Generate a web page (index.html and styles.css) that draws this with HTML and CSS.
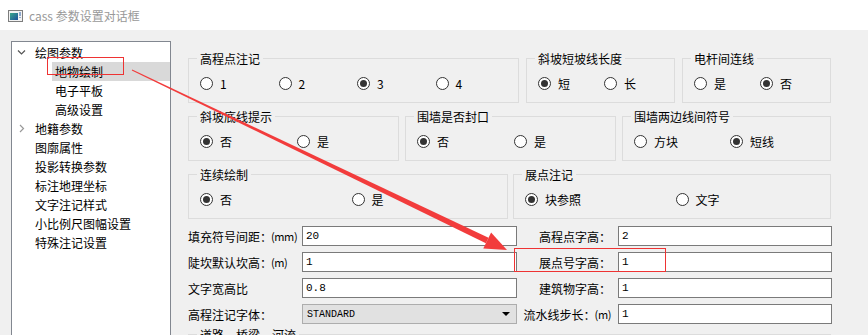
FILE: index.html
```html
<!DOCTYPE html>
<html lang="zh-CN">
<head>
  <meta charset="UTF-8" />
  <title>cass 参数设置对话框</title>
  <link rel="stylesheet" href="styles.css">
</head>
<body>
  <div class="titlebar">
    <svg class="app-icon" width="15" height="12" viewBox="0 0 15 12">
      <defs>
        <linearGradient id="ig" x1="0" y1="0" x2="1" y2="1">
          <stop offset="0" stop-color="#3aa88a"/>
          <stop offset="1" stop-color="#1d4f9c"/>
        </linearGradient>
      </defs>
      <rect x="0.5" y="0.5" width="14" height="11" fill="#f2f2f2" stroke="#7d7d7d"/>
      <rect x="2" y="3" width="8" height="7" fill="url(#ig)"/>
      <rect x="11.5" y="2" width="1" height="4" fill="#2b5fa8"/>
      <rect x="11.5" y="7" width="1" height="1" fill="#2b5fa8"/>
    </svg>
    <span class="title">cass 参数设置对话框</span>
  </div>

  <div class="dialog">
    <ul class="tree">
      <li class="node">
        <svg class="caret" width="9" height="9" viewBox="0 0 9 9"><path d="M1 2.5 L4.5 6 L8 2.5" fill="none" stroke="#555" stroke-width="1.2"/></svg>
        绘图参数
      </li>
      <li class="leaf selected">地物绘制</li>
      <li class="leaf">电子平板</li>
      <li class="leaf">高级设置</li>
      <li class="node">
        <svg class="caret" width="9" height="9" viewBox="0 0 9 9"><path d="M3 1 L6.5 4.5 L3 8" fill="none" stroke="#999" stroke-width="1.2"/></svg>
        地籍参数
      </li>
      <li class="top">图廓属性</li>
      <li class="top">投影转换参数</li>
      <li class="top">标注地理坐标</li>
      <li class="top">文字注记样式</li>
      <li class="top">小比例尺图幅设置</li>
      <li class="top">特殊注记设置</li>
    </ul>

    <div class="panel">
      <div class="groups">
        <div class="group-row">
          <div class="group w331">
            <span class="group-title">高程点注记</span>
            <div class="opts">
              <label class="opt"><span class="radio"></span>1</label>
              <label class="opt"><span class="radio"></span>2</label>
              <label class="opt"><span class="radio on"></span>3</label>
              <label class="opt"><span class="radio"></span>4</label>
            </div>
          </div>
          <div class="group w149">
            <span class="group-title">斜坡短坡线长度</span>
            <div class="opts">
              <label class="opt"><span class="radio on"></span>短</label>
              <label class="opt"><span class="radio"></span>长</label>
            </div>
          </div>
          <div class="group w149">
            <span class="group-title">电杆间连线</span>
            <div class="opts">
              <label class="opt"><span class="radio"></span>是</label>
              <label class="opt"><span class="radio on"></span>否</label>
            </div>
          </div>
        </div>

        <div class="group-row row2">
          <div class="group w211">
            <span class="group-title">斜坡底线提示</span>
            <div class="opts">
              <label class="opt"><span class="radio on"></span>否</label>
              <label class="opt"><span class="radio"></span>是</label>
            </div>
          </div>
          <div class="group w211">
            <span class="group-title">围墙是否封口</span>
            <div class="opts">
              <label class="opt"><span class="radio on"></span>否</label>
              <label class="opt"><span class="radio"></span>是</label>
            </div>
          </div>
          <div class="group w209">
            <span class="group-title">围墙两边线间符号</span>
            <div class="opts">
              <label class="opt"><span class="radio"></span>方块</label>
              <label class="opt"><span class="radio on"></span>短线</label>
            </div>
          </div>
        </div>

        <div class="group-row row3">
          <div class="group w320">
            <span class="group-title">连续绘制</span>
            <div class="opts">
              <label class="opt"><span class="radio on"></span>否</label>
              <label class="opt"><span class="radio"></span>是</label>
            </div>
          </div>
          <div class="group w318">
            <span class="group-title">展点注记</span>
            <div class="opts">
              <label class="opt"><span class="radio on"></span>块参照</label>
              <label class="opt"><span class="radio"></span>文字</label>
            </div>
          </div>
        </div>
      </div>

      <div class="fields">
        <span class="label">填充符号间距：<span class="unit">(mm)</span></span>
        <div class="input">20</div>
        <span class="label right">高程点字高：</span>
        <div class="input">2</div>

        <span class="label">陡坎默认坎高：<span class="unit">(m)</span></span>
        <div class="input">1</div>
        <span class="label right">展点号字高：</span>
        <div class="input">1</div>

        <span class="label">文字宽高比</span>
        <div class="input">0.8</div>
        <span class="label right">建筑物字高：</span>
        <div class="input">1</div>

        <span class="label">高程注记字体：</span>
        <div class="combo">STANDARD<span class="arrow"></span></div>
        <span class="label right">流水线步长：<span class="unit">(m)</span></span>
        <div class="input">1</div>
      </div>

      <div class="group road">
        <span class="group-title">道路、桥梁、河流</span>
      </div>
    </div>
  </div>

  <svg class="marks" width="868" height="335" viewBox="0 0 868 335">
    <rect x="47.5" y="57.5" width="76" height="17" fill="none" stroke="#ee3333" stroke-width="1"/>
    <rect x="514.5" y="248.5" width="151" height="23" fill="none" stroke="#ee3333" stroke-width="1"/>
    <polygon points="131.8,70.5 132.2,69.5 488.5,237.8 485.9,243.2" fill="#f23c3c"/>
    <polygon points="483.3,248.6 491.1,232.4 507,250" fill="#f23c3c"/>
  </svg>
</body>
</html>
```

FILE: styles.css
```css
* {
  margin: 0;
  padding: 0;
  box-sizing: border-box;
}

body {
  background: #f0f0f0;
  font-family: "Noto Sans CJK SC", "Noto Sans", sans-serif;
  font-size: 12px;
  color: #000;
  width: 868px;
  height: 335px;
  overflow: hidden;
  position: relative;
}

.titlebar {
  height: 30px;
  background: #fff;
  display: flex;
  align-items: center;
  padding-left: 8px;
}

.app-icon {
  margin-right: 6px;
  margin-top: 1px;
}

.title {
  color: #999;
  font-size: 12px;
}

.dialog {
  display: flex;
  align-items: flex-start;
  padding: 11px 0 0 11px;
}

/* left tree */
.tree {
  list-style: none;
  width: 160px;
  height: 320px;
  flex: none;
  background: #fff;
  border: 1px solid #828790;
  padding-top: 1px;
}

.tree li {
  height: 19px;
  display: flex;
  align-items: center;
  white-space: nowrap;
}

.tree .node {
  padding-left: 5px;
}

.tree .caret {
  margin-right: 9px;
}

.tree .top {
  padding-left: 23px;
}

.tree .leaf {
  margin-left: 40px;
  padding-left: 3px;
}

.tree .selected {
  background: #d9d9d9;
}

/* right panel */
.panel {
  margin-left: 17px;
  width: 644px;
  padding-top: 17px;
}

.groups {
  display: flex;
  flex-direction: column;
  gap: 13px;
}

.group-row {
  display: flex;
  gap: 7px;
}

.row2 {
  gap: 6px;
}

.row3 {
  gap: 5px;
}

.group {
  border: 1px solid #dcdcdc;
  height: 45px;
  flex: none;
}

.w331 { width: 331px; }
.w149 { width: 149px; }
.w211 { width: 211px; }
.w209 { width: 209px; }
.w320 { width: 320px; }
.w318 { width: 318px; }

.group-title {
  display: block;
  width: max-content;
  height: 15px;
  line-height: 15px;
  margin: -8px 0 0 8px;
  padding: 0 3px;
  background: #f0f0f0;
}

.opts {
  display: grid;
  grid-auto-flow: column;
  grid-auto-columns: 1fr;
  padding: 0 4px 0 11px;
  margin-top: 7px;
  height: 20px;
}

.opt {
  display: flex;
  align-items: center;
  gap: 7px;
}

.radio {
  width: 13px;
  height: 13px;
  border: 1px solid #333;
  border-radius: 50%;
  background: #fff;
  display: flex;
  align-items: center;
  justify-content: center;
  flex: none;
}

.radio.on::after {
  content: "";
  width: 7px;
  height: 7px;
  border-radius: 50%;
  background: #333;
}

/* input rows */
.fields {
  display: grid;
  grid-template-columns: 114px 215px 101px 214px;
  grid-auto-rows: 20px;
  row-gap: 6px;
  margin-top: 7px;
}

.label {
  display: flex;
  align-items: center;
  white-space: nowrap;
}

.label.right {
  justify-content: flex-end;
  padding-right: 7px;
}

.unit {
  font-size: 11px;
  letter-spacing: -0.4px;
  margin-left: -1px;
}

.input,
.combo {
  border: 1px solid #7a7a7a;
  background: #fff;
  font-family: "Liberation Mono", "DejaVu Sans Mono", monospace;
  font-size: 11px;
  display: flex;
  align-items: center;
  padding-left: 3px;
}

.combo {
  background: #e1e1e1;
  border-color: #adadad;
  font-size: 10px;
  justify-content: space-between;
  padding: 0 6px 0 4px;
}

.arrow {
  width: 0;
  height: 0;
  border-left: 4px solid transparent;
  border-right: 4px solid transparent;
  border-top: 4px solid #000;
}

.road {
  margin-top: 10px;
  width: 643px;
}

/* red annotations drawn over the dialog */
.marks {
  position: absolute;
  top: 0;
  left: 0;
  pointer-events: none;
}
```
